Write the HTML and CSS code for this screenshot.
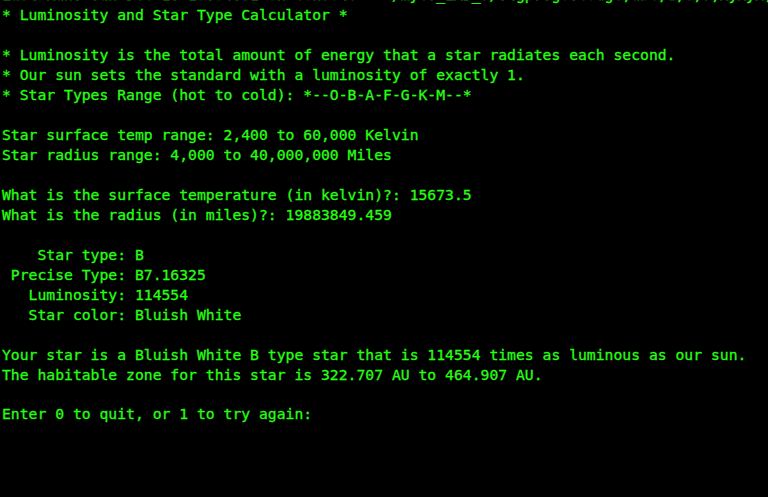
FILE: index.html
```html
<!DOCTYPE html>
<html lang="en">
<head>
<meta charset="utf-8">
<title>Luminosity and Star Type Calculator</title>
<link rel="stylesheet" href="styles.css">
</head>
<body class="terminal">
<pre class="output">Last Run: Sun Dec 16 10:04:51 on console - ~/myCS_LAB_3/Stgpr.go.codge,abc,d,e,f,xyxyx,
* Luminosity and Star Type Calculator *

* Luminosity is the total amount of energy that a star radiates each second.
* Our sun sets the standard with a luminosity of exactly 1.
* Star Types Range (hot to cold): *--O-B-A-F-G-K-M--*

Star surface temp range: 2,400 to 60,000 Kelvin
Star radius range: 4,000 to 40,000,000 Miles

What is the surface temperature (in kelvin)?: 15673.5
What is the radius (in miles)?: 19883849.459

    Star type: B
 Precise Type: B7.16325
   Luminosity: 114554
   Star color: Bluish White

Your star is a Bluish White B type star that is 114554 times as luminous as our sun.
The habitable zone for this star is 322.707 AU to 464.907 AU.

Enter 0 to quit, or 1 to try again: </pre>
</body>
</html>
```
FILE: styles.css
```css
html, body {
  margin: 0;
  padding: 0;
  background: #000;
  height: 100%;
  overflow: hidden;
}

.terminal {
  width: 768px;
  height: 497px;
}

.output {
  margin: -14.6px 0 0 0;
  padding: 0 0 0 2px;
  font-family: "DejaVu Sans Mono", "Liberation Mono", monospace;
  font-size: 14.73px;
  line-height: 19.95px;
  color: #28fe14;
  -webkit-text-stroke: 0.3px #28fe14;
  white-space: pre;
  overflow: hidden;
}
```
